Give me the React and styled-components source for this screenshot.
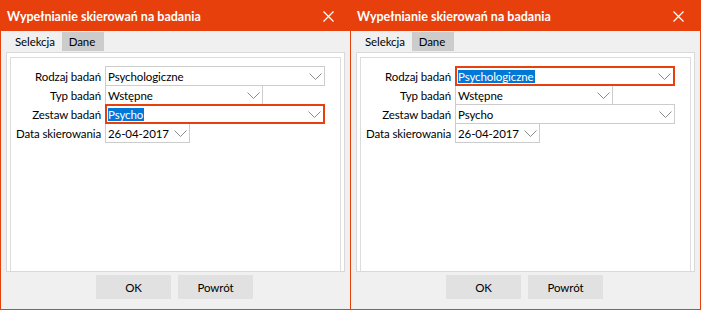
import React from 'react'
import styled, { createGlobalStyle } from 'styled-components'

const ORANGE = '#E8400C'

const GlobalStyle = createGlobalStyle`
  html, body {
    margin: 0;
    padding: 0;
    background: #ffffff;
  }
  body {
    font-family: Lato, "Noto Sans", "Liberation Sans", sans-serif;
    font-size: 11.5px;
    letter-spacing: -0.1px;
    color: #000;
  }
`

const Screen = styled.div`
  display: flex;
  width: 701px;
  height: 310px;
`

const Window = styled.div`
  box-sizing: border-box;
  width: ${(p) => (p.first ? 351 : 350)}px;
  height: 310px;
  border: 1px solid ${ORANGE};
  border-left: ${(p) => (p.first ? `1px solid ${ORANGE}` : 'none')};
  background: #f0f0f0;
  display: flex;
  flex-direction: column;
`

const TitleBar = styled.div`
  height: 30px;
  background: ${ORANGE};
  display: flex;
  align-items: center;
  justify-content: space-between;
  padding: 0 16px 0 6px;
  h1{
    margin: 0;
    font-size: 12.5px;
    font-weight: 700;
    letter-spacing: 0;
    color: #fff;
  }
`

const TabStrip = styled.div`
  display: flex;
  height: 19px;
  margin-top: 1px;
  padding-left: 5px;
`

const Tab = styled.div`
  display: flex;
  align-items: center;
  padding: ${(p) => (p.active ? '0 9px 0 7px' : '0 7px 0 9px')};
  background: ${(p) => (p.active ? '#cccccc' : '#f0f0f0')};
`

const TabPage = styled.div`
  margin: 1px 5px 0 5px;
  height: 220px;
  border: 1px solid #d9d9d9;
  background: #fff;
  padding: 4px 3px 0 3px;
  box-sizing: border-box;
`

const Group = styled.div`
  height: 100%;
  box-sizing: border-box;
  border: 1px solid #dcdcdc;
  border-bottom: none;
  padding: 8px 0 0 6px;
`

const Row = styled.div`
  display: flex;
  align-items: center;
  height: 20px;
  margin-top: ${(p) => (p.first ? 0 : -1)}px;
`

const Label = styled.div`
  display: flex;
  justify-content: flex-end;
  width: 84px;
  padding-right: 4px;
  white-space: nowrap;
`

const Combo = styled.div`
  position: relative;
  z-index: ${(p) => (p.focused ? 2 : 1)};
  box-sizing: border-box;
  width: ${(p) => p.w}px;
  height: 20px;
  background: #fff;
  border: ${(p) => (p.focused ? `2px solid ${ORANGE}` : '1px solid #cccccc')};
  display: flex;
  align-items: center;
  justify-content: space-between;
  padding: 0 2px 0 ${(p) => (p.focused ? 1 : 2)}px;
  svg{
    flex-shrink: 0;
  }
`

const Value = styled.span`
  line-height: 13px;
  padding: 0 1px 0 0;
  background: ${(p) => (p.selected ? '#0078d7' : 'transparent')};
  color: ${(p) => (p.selected ? '#fff' : '#000')};
`

const Buttons = styled.div`
  display: flex;
  justify-content: center;
  gap: 7px;
  margin-top: 3px;
  padding-right: 2px;
`

const Button = styled.div`
  width: 75px;
  height: 24px;
  background: #e1e1e1;
  display: flex;
  align-items: center;
  justify-content: center;
`

const Chevron = () => (
  <svg width="13" height="7" viewBox="0 0 13 7">
    <polyline points="0.5,0.5 6.5,6.5 12.5,0.5" fill="none" stroke="#8a8a8a" strokeWidth="1" />
  </svg>
)

const Close = () => (
  <svg width="11" height="11" viewBox="0 0 11 11">
    <path d="M0.5 0.5 L10.5 10.5 M10.5 0.5 L0.5 10.5" stroke="#fff" strokeWidth="1.2" />
  </svg>
)

const Dialog = ({ first, focus }) => (
  <Window first={first}>
    <TitleBar>
      <h1>Wypełnianie skierowań na badania</h1>
      <Close />
    </TitleBar>
    <TabStrip>
      <Tab>Selekcja</Tab>
      <Tab active>Dane</Tab>
    </TabStrip>
    <TabPage>
      <Group>
        <Row first>
          <Label>Rodzaj badań</Label>
          <Combo w={220} focused={focus === 'rodzaj'}>
            <Value selected={focus === 'rodzaj'}>Psychologiczne</Value>
            <Chevron />
          </Combo>
        </Row>
        <Row>
          <Label>Typ badań</Label>
          <Combo w={158}>
            <Value>Wstępne</Value>
            <Chevron />
          </Combo>
        </Row>
        <Row>
          <Label>Zestaw badań</Label>
          <Combo w={220} focused={focus === 'zestaw'}>
            <Value selected={focus === 'zestaw'}>Psycho</Value>
            <Chevron />
          </Combo>
        </Row>
        <Row>
          <Label>Data skierowania</Label>
          <Combo w={85}>
            <Value>26-04-2017</Value>
            <Chevron />
          </Combo>
        </Row>
      </Group>
    </TabPage>
    <Buttons>
      <Button>OK</Button>
      <Button>Powrót</Button>
    </Buttons>
  </Window>
)

const App = () => {
  return (
    <>
      <GlobalStyle />
      <Screen>
        <Dialog first focus="zestaw" />
        <Dialog focus="rodzaj" />
      </Screen>
    </>
  )
}

export default App
